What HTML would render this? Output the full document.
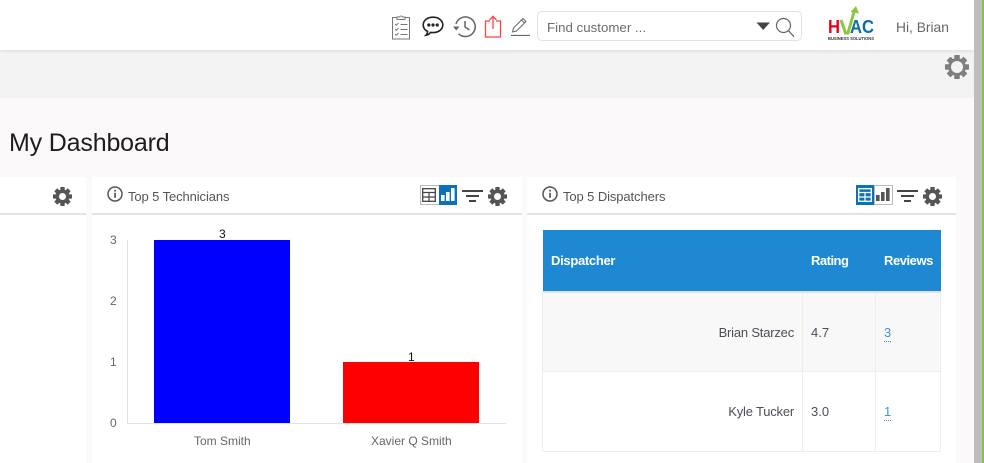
<!DOCTYPE html>
<html><head><meta charset="utf-8">
<style>
html,body{margin:0;padding:0;width:984px;height:463px;overflow:hidden;background:#fbf9fa;font-family:"Liberation Sans",sans-serif}
div,svg,span{position:absolute}
.t{white-space:nowrap}
</style></head>
<body>
<svg width="0" height="0" style="position:absolute"><defs>
<g id="gear"><rect x="-2.300" y="-10" width="4.600" height="20" rx=".6"/><rect x="-2.300" y="-10" width="4.600" height="20" rx=".6" transform="rotate(45)"/><rect x="-2.300" y="-10" width="4.600" height="20" rx=".6" transform="rotate(90)"/><rect x="-2.300" y="-10" width="4.600" height="20" rx=".6" transform="rotate(135)"/><circle r="7.400"/><circle r="3.700" fill="#fff"/></g>
<g id="info"><circle cx="8" cy="8" r="7" fill="none" stroke="#555" stroke-width="1.500"/><rect x="7.200" y="6.800" width="1.700" height="5" fill="#555"/><rect x="7.200" y="3.800" width="1.700" height="1.800" fill="#555"/></g>
<g id="filter"><rect x="0" y="0" width="21" height="2" fill="#444"/><rect x="4" y="5" width="13" height="2" fill="#444"/><rect x="7" y="10" width="7" height="2" fill="#444"/></g>
<g id="table"><rect x="0.700" y="0.700" width="12.600" height="12.600" fill="none" stroke="currentColor" stroke-width="1.300"/><path d="M1 4.500h12M1 9h12M7 4.500v9" stroke="currentColor" fill="none" stroke-width="1.200"/></g>
<g id="bars"><rect x="0" y="7" width="3.600" height="6" fill="currentColor"/><rect x="5" y="4" width="3.600" height="9" fill="currentColor"/><rect x="10" y="0" width="3.600" height="13" fill="currentColor"/></g>
</defs></svg>

<!-- header -->
<div style="left:0;top:0;width:974px;height:50px;background:#fff;box-shadow:0 1px 3px rgba(0,0,0,.13);z-index:3"></div>
<div style="left:0;top:51px;width:974px;height:47px;background:#f3f3f3"></div>
<div style="left:974px;top:0;width:7.500px;height:463px;background:#bdbdbd;z-index:5"></div>
<div style="left:981.500px;top:0;width:2.500px;height:463px;background:#8bc34a;z-index:5"></div>

<div style="left:0;top:0;width:974px;height:50px;z-index:4">
<!-- clipboard -->
<svg style="left:391px;top:14px" width="20" height="26" viewBox="0 0 20 26" fill="none" stroke="#777" stroke-width="1"><rect x="1.500" y="3.500" width="17" height="21.500"/><path d="M6 5.500V3h2.500a1.600 1.600 0 0 1 3 0H14v2.500z" fill="#fff"/><path d="M4 10l1.300 1.300L7.500 9M4 15l1.300 1.300L7.500 14M4 20l1.300 1.300L7.500 19M9.500 10.500h7M9.500 15.500h7M9.500 20.500h7"/></svg>
<!-- chat -->
<svg style="left:422px;top:16px" width="22" height="21" viewBox="0 0 22 21"><path d="M11 1.200c5.500 0 9.800 3.200 9.800 7.700s-4.300 7.700-9.800 7.700c-.9 0-1.700-.1-2.500-.2-1 1.500-2.700 2.500-4.500 2.800 1-1 1.500-2.200 1.600-3.700-2.700-1.300-4.400-3.700-4.400-6.600 0-4.500 4.300-7.700 9.800-7.700z" fill="#fff" stroke="#222" stroke-width="1.600"/><circle cx="6.800" cy="9" r="1.600" fill="#222"/><circle cx="11" cy="9" r="1.600" fill="#222"/><circle cx="15.200" cy="9" r="1.600" fill="#222"/></svg>
<!-- history -->
<svg style="left:452px;top:15px" width="24" height="23" viewBox="0 0 24 23" fill="none" stroke="#666" stroke-width="1.500"><path d="M4 9a9.800 9.800 0 1 1 2.600 9.800"/><path d="M1 11.500l3.300 4 3.200-4" fill="#666" stroke="none"/><path d="M13 6v6l4.500 3"/></svg>
<!-- share -->
<svg style="left:484px;top:15px" width="18" height="23" viewBox="0 0 18 23" fill="none" stroke="#f44" stroke-width="1.300"><path d="M6 6H1.500v16h15V6H12"/><path d="M9 14V1.500M5.500 5L9 1.300 12.500 5" stroke-width="1.300"/></svg>
<!-- pencil -->
<svg style="left:510px;top:16px" width="20" height="20" viewBox="0 0 20 20" fill="none" stroke="#666" stroke-width="1"><path d="M1 19.500h19" stroke-width="1.200"/><path d="M2.500 16l1-4L13 2.500l3 3L6.500 15z"/><path d="M11.500 4l3 3"/></svg>

<div style="left:537px;top:11px;width:263px;height:28px;border:1px solid #e2e2e2;border-radius:5px;background:#fff"></div>
<div class="t" style="left:547px;top:20px;font-size:13.300px;line-height:16px;color:#6c6c6c">Find customer ...</div>
<svg style="left:756px;top:22px" width="15" height="9"><path d="M0.500 0.500h13.500l-6.800 7.500z" fill="#444"/></svg>
<svg style="left:775px;top:17px" width="20" height="21" viewBox="0 0 20 21" fill="none" stroke="#666" stroke-width="1.200"><circle cx="8.500" cy="8.500" r="7"/><path d="M13.500 13.700l5.500 6"/></svg>

<!-- logo -->
<div style="left:827px;top:5px;width:50px;height:38px;overflow:hidden">
 <svg style="left:0;top:0" width="50" height="38" viewBox="0 0 50 38">
  <text x="1" y="28" font-family="Liberation Sans" font-weight="bold" font-size="18" fill="#e8001c" textLength="12" lengthAdjust="spacingAndGlyphs">H</text>
  <text x="23" y="28" font-family="Liberation Sans" font-weight="bold" font-size="18" fill="#0a6ea8" textLength="24" lengthAdjust="spacingAndGlyphs">AC</text>
  <path d="M14 15l4.500 13h2.500l6-21" fill="none" stroke="#8cc63f" stroke-width="3"/>
  <path d="M23.500 7l5.500-6 3 7.500z" fill="#8cc63f"/>
  <text x="1" y="35" font-family="Liberation Sans" font-weight="bold" font-size="4.500" fill="#333" textLength="46" lengthAdjust="spacingAndGlyphs">BUSINESS SOLUTIONS</text>
 </svg>
</div>
<div class="t" style="left:896px;top:20px;font-size:13.800px;line-height:16px;color:#666">Hi, Brian</div>
</div>

<!-- big gear -->
<svg style="left:945px;top:55px;z-index:2" width="24" height="24" viewBox="-10 -10 20 20" fill="#7f7f7f"><use href="#gear"/><circle r="5" fill="#f3f3f3"/></svg>

<div class="t" style="left:9px;top:128px;font-size:25px;line-height:30px;color:#1d1d1d;letter-spacing:-.17px">My Dashboard</div>

<!-- left panel -->
<div style="left:0;top:177px;width:86px;height:286px;background:#fff"></div>
<div style="left:0;top:213px;width:86px;height:2px;background:#e4e4e4"></div>
<svg style="left:52.500px;top:186.500px" width="19" height="19" viewBox="-10 -10 20 20" fill="#555"><use href="#gear"/></svg>

<!-- middle panel -->
<div style="left:92px;top:177px;width:430px;height:286px;background:#fff"></div>
<div style="left:92px;top:213px;width:430px;height:2px;background:#e4e4e4"></div>
<svg style="left:107px;top:186px" width="16" height="16"><use href="#info"/></svg>
<div class="t" style="left:128px;top:189px;font-size:13px;line-height:16px;color:#555;letter-spacing:-.1px">Top 5 Technicians</div>
<div style="left:420px;top:185px;width:18px;height:18px;border:1px solid #bbb;background:#fff"></div>
<svg style="left:422px;top:188px;color:#444" width="14" height="14"><use href="#table"/></svg>
<div style="left:439px;top:185px;width:18px;height:20px;background:#0b72b8"></div>
<svg style="left:441px;top:188px;color:#fff" width="14" height="14"><use href="#bars"/></svg>
<svg style="left:462px;top:190px" width="21" height="12"><use href="#filter"/></svg>
<svg style="left:487.500px;top:186.500px" width="19" height="19" viewBox="-10 -10 20 20" fill="#555"><use href="#gear"/></svg>

<!-- chart -->
<div style="left:127px;top:240px;width:1px;height:183px;background:#e2e2e2"></div>
<div style="left:127px;top:423px;width:379px;height:1px;background:#e2e2e2"></div>
<div style="left:154px;top:240px;width:136px;height:183px;background:#0000ff"></div>
<div style="left:343px;top:362px;width:136px;height:61px;background:#ff0000"></div>
<div class="t" style="left:110px;top:233px;font-size:12px;line-height:14px;color:#666">3</div>
<div class="t" style="left:110px;top:294px;font-size:12px;line-height:14px;color:#666">2</div>
<div class="t" style="left:110px;top:355px;font-size:12px;line-height:14px;color:#666">1</div>
<div class="t" style="left:110px;top:416px;font-size:12px;line-height:14px;color:#666">0</div>
<div class="t" style="left:219px;top:227px;font-size:12px;line-height:14px;color:#111">3</div>
<div class="t" style="left:408px;top:350px;font-size:12px;line-height:14px;color:#111">1</div>
<div class="t" style="left:194px;top:434px;font-size:12px;line-height:14px;color:#666">Tom Smith</div>
<div class="t" style="left:371px;top:434px;font-size:12px;line-height:14px;color:#666">Xavier Q Smith</div>

<!-- right panel -->
<div style="left:527px;top:177px;width:429px;height:286px;background:#fff"></div>
<div style="left:527px;top:213px;width:429px;height:2px;background:#e4e4e4"></div>
<svg style="left:542px;top:186px" width="16" height="16"><use href="#info"/></svg>
<div class="t" style="left:563px;top:189px;font-size:13px;line-height:16px;color:#555;letter-spacing:-.1px">Top 5 Dispatchers</div>
<div style="left:856px;top:185px;width:18px;height:20px;background:#0b72b8"></div>
<svg style="left:858px;top:188px;color:#fff" width="14" height="14"><use href="#table"/></svg>
<div style="left:874px;top:185px;width:17px;height:18px;border:1px solid #bbb;background:#fff"></div>
<svg style="left:876px;top:188px;color:#555" width="14" height="14"><use href="#bars"/></svg>
<svg style="left:897px;top:190px" width="21" height="12"><use href="#filter"/></svg>
<svg style="left:922.500px;top:186.500px" width="19" height="19" viewBox="-10 -10 20 20" fill="#555"><use href="#gear"/></svg>

<!-- table -->
<div style="left:543px;top:230px;width:398px;height:61px;background:#1e88d2"></div>
<div class="t" style="left:551px;top:253px;font-size:13px;line-height:16px;font-weight:bold;color:#fff;letter-spacing:-.3px">Dispatcher</div>
<div class="t" style="left:811px;top:253px;font-size:13px;line-height:16px;font-weight:bold;color:#fff;letter-spacing:-.5px">Rating</div>
<div class="t" style="left:884px;top:253px;font-size:13px;line-height:16px;font-weight:bold;color:#fff;letter-spacing:-.45px">Reviews</div>
<div style="left:542px;top:291px;width:399px;height:2px;background:#e2e2e2"></div>
<div style="left:543px;top:293px;width:398px;height:78px;background:#f8f8f8"></div>
<div style="left:542px;top:293px;width:1px;height:159px;background:#eef0e6"></div>
<div style="left:802px;top:293px;width:1px;height:159px;background:#eef0e6"></div>
<div style="left:875px;top:293px;width:1px;height:159px;background:#eef0e6"></div>
<div style="left:940px;top:293px;width:1px;height:159px;background:#eef0e6"></div>
<div style="left:542px;top:371px;width:399px;height:1px;background:#eef0e6"></div>
<div style="left:542px;top:451px;width:399px;height:1px;background:#eef0e6"></div>
<div class="t" style="right:190px;top:325px;font-size:13px;line-height:16px;color:#4a4f57;letter-spacing:-.2px">Brian Starzec</div>
<div class="t" style="left:811px;top:325px;font-size:13px;line-height:16px;color:#4a4f57">4.7</div>
<div class="t" style="left:884px;top:325px;font-size:13px;line-height:16px;color:#3d96cf;border-bottom:1px dotted #3d96cf">3</div>
<div class="t" style="right:190px;top:404px;font-size:13px;line-height:16px;color:#4a4f57;letter-spacing:-.2px">Kyle Tucker</div>
<div class="t" style="left:811px;top:404px;font-size:13px;line-height:16px;color:#4a4f57">3.0</div>
<div class="t" style="left:884px;top:404px;font-size:13px;line-height:16px;color:#3d96cf;border-bottom:1px dotted #3d96cf">1</div>
</body></html>
